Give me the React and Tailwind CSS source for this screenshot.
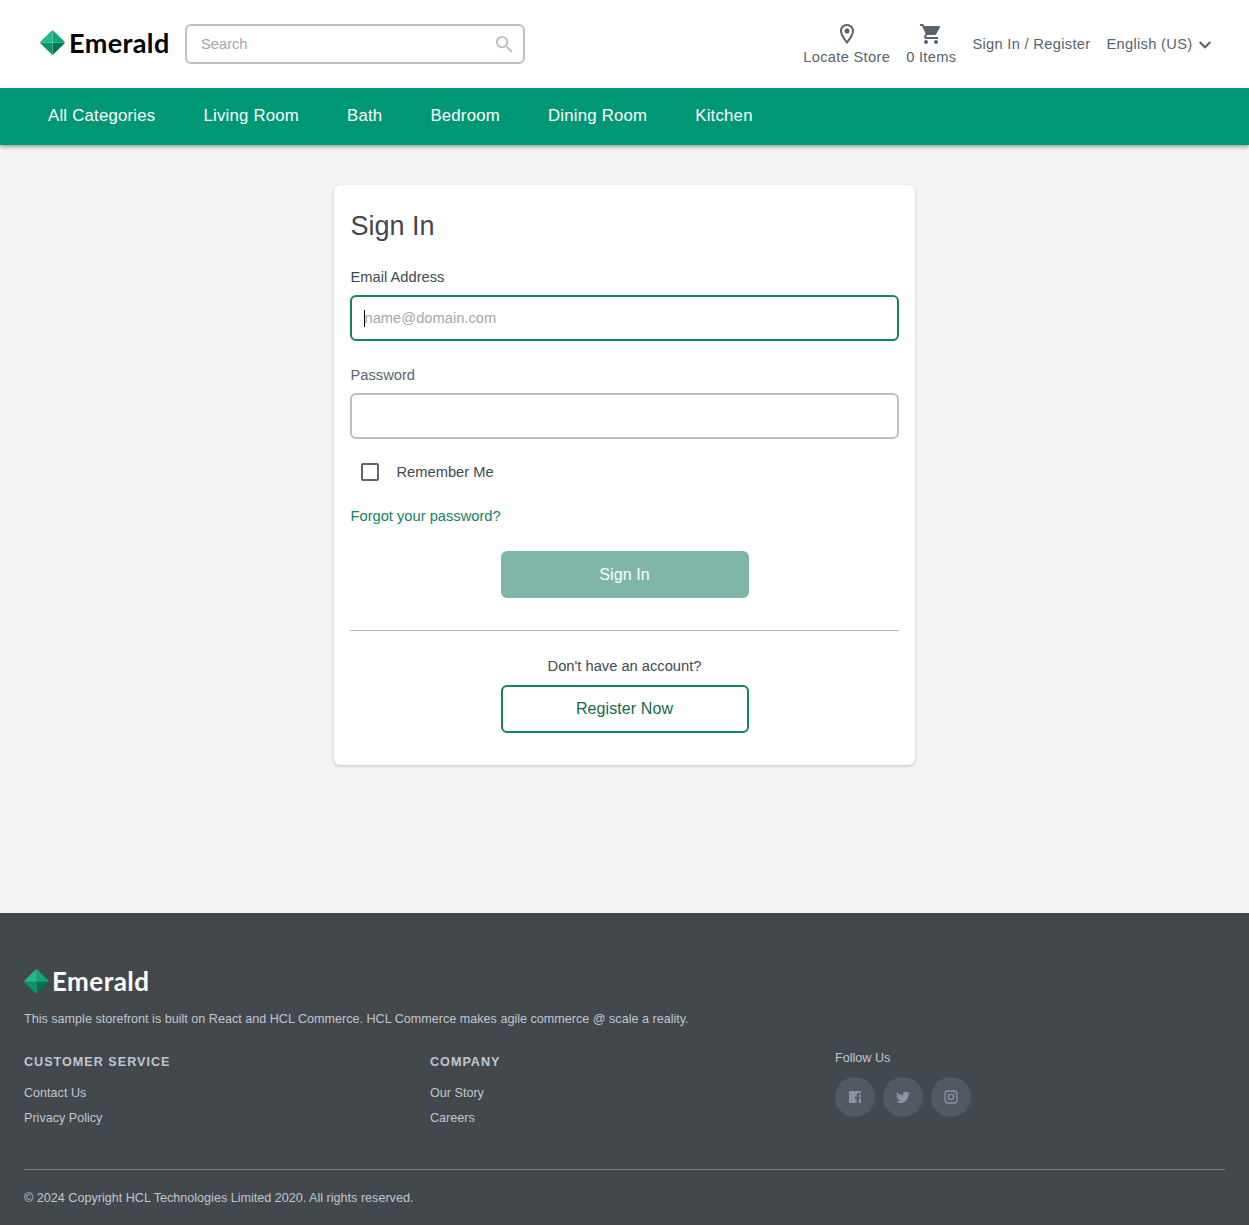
import React from "react";
import {
  MdSearch,
  MdOutlineLocationOn,
  MdShoppingCart,
  MdCheckBoxOutlineBlank,
} from "react-icons/md";

function Gem({ className }) {
  return (
    <svg viewBox="0 0 26 26" className={className} aria-hidden="true">
      <path d="M13 0.3 L13 13 L0.3 13 Q0 12.6 0.6 12 L12 0.8 Q12.5 0.3 13 0.3Z" fill="#23b98e" />
      <path d="M13 0.3 Q13.5 0.3 14 0.8 L25.4 12 Q26 12.6 25.7 13 L13 13Z" fill="#0da77b" />
      <path d="M0.3 13 L13 13 L13 25.7 Q12.5 25.7 12 25.2 L0.6 14 Q0 13.4 0.3 13Z" fill="#079669" />
      <path d="M13 13 L25.7 13 Q26 13.4 25.4 14 L14 25.2 Q13.5 25.7 13 25.7Z" fill="#05734f" />
      <path d="M0.5 13H25.5M13 0.5V25.5" stroke="#5fd0ae" strokeOpacity="0.45" strokeWidth="0.5" />
    </svg>
  );
}

const categories = ["All Categories", "Living Room", "Bath", "Bedroom", "Dining Room", "Kitchen"];

function Header() {
  return (
    <header className="flex h-[88px] items-start bg-white pl-10 pr-[37px] pt-6 text-[14.7px] tracking-[0.3px] text-[#58636f]">
      <a className="mt-1 flex h-7 w-[130px] items-center">
        <Gem className="mt-px size-[25px] shrink-0" />
        <span className="ml-1 mt-px font-['Lato'] text-[27px] font-bold leading-7 tracking-[0.4px] text-black">Emerald</span>
      </a>
      <div className="ml-[15px] flex h-10 w-[340px] items-center justify-between rounded-md border-2 border-[#bfbfbf] pl-3.5 pr-[7px]">
        <span className="tracking-normal text-[#a6a6a6]">Search</span>
        <MdSearch className="size-[23px] text-[#bdbdbd]" />
      </div>
      <nav className="ml-auto flex h-10 items-center gap-4 whitespace-nowrap leading-[22px]">
        <a className="mt-0.5 flex flex-col items-center">
          <MdOutlineLocationOn className="size-6" />
          <span>Locate Store</span>
        </a>
        <a className="mt-0.5 flex flex-col items-center">
          <MdShoppingCart className="size-6" />
          <span>0 Items</span>
        </a>
        <a>Sign In / Register</a>
        <a className="flex items-center">
          English (US)
          <svg viewBox="0 0 14 10" className="ml-[5.5px] mt-0.5 h-2.5 w-3.5" fill="none" stroke="currentColor" strokeWidth="2.1">
            <path d="M1.7 2 L7 7.3 L12.3 2" />
          </svg>
        </a>
      </nav>
    </header>
  );
}

function SignIn() {
  return (
    <section className="mx-auto h-[580px] w-[581px] rounded-md bg-white px-4 pt-[25px] text-[14.7px] leading-[22px] text-[#404b52] shadow-[0_1px_3px_rgba(0,0,0,0.2)]">
      <h1 className="pl-[0.5px] text-[27px] leading-8 text-[#42484d]">Sign In</h1>
      <label className="mt-6 block pl-[0.5px]">Email Address</label>
      <div className="mt-[7px] flex h-[46px] items-center rounded-md border-2 border-[#128463] pl-3 text-[#a6a6a6]">
        <span className="h-[17px] w-px bg-black" />
        <span className="-ml-[0.5px]">name@domain.com</span>
      </div>
      <label className="mt-[23px] block pl-[0.5px] text-[#5b6570]">Password</label>
      <div className="mt-[7px] h-[46px] rounded-md border-2 border-[#bfbfbf]" />
      <div className="mt-[21px] flex h-6 items-center pl-2">
        <MdCheckBoxOutlineBlank className="size-6 text-[#5b6570]" />
        <span className="ml-[14.5px]">Remember Me</span>
      </div>
      <a className="mt-[21px] block pl-[0.5px] text-[#128463]">Forgot your password?</a>
      <button className="mx-auto mt-6 block h-[47px] w-[248px] rounded-md bg-[#80b6a9] text-[16px] tracking-[0.1px] text-white">Sign In</button>
      <hr className="mt-8 border-t border-[#b5b9b8]" />
      <p className="mt-6 text-center">Don&apos;t have an account?</p>
      <button className="mx-auto mt-2 block h-12 w-[248px] rounded-md border-2 border-[#128463] text-[16px] tracking-[0.1px] text-[#15674f]">Register Now</button>
    </section>
  );
}

function FooterColumn({ title, links }) {
  return (
    <div className="pt-1">
      <h2 className="font-bold tracking-[1px]">{title}</h2>
      <ul className="mt-[9px]">
        {links.map((link) => (
          <li key={link} className="h-[25px] leading-[25px]">{link}</li>
        ))}
      </ul>
    </div>
  );
}

const social = [
  { name: "Facebook", d: "M4 3h16a1 1 0 0 1 1 1v16a1 1 0 0 1-1 1h-2.5v-6.2h2.2l.5-3h-2.7V10q0-1.2 1.3-1.2h1.5V6H18q-3.7 0-3.7 3.7v2.1H11.8v3h2.5V21H4a1 1 0 0 1-1-1V4a1 1 0 0 1 1-1z" },
  { name: "Twitter", d: "M22.46 6c-.77.35-1.6.58-2.46.69.88-.53 1.56-1.37 1.88-2.38-.83.5-1.75.85-2.72 1.05C18.37 4.5 17.26 4 16 4c-2.35 0-4.27 1.92-4.27 4.29 0 .34.04.67.11.98C8.28 9.09 5.11 7.38 3 4.79c-.37.63-.58 1.37-.58 2.15 0 1.49.75 2.81 1.91 3.56-.71 0-1.37-.2-1.95-.5v.03c0 2.08 1.48 3.82 3.44 4.21a4.2 4.2 0 0 1-1.93.07 4.28 4.28 0 0 0 4 2.98 8.52 8.52 0 0 1-5.33 1.84q-.51 0-1.02-.06C3.44 20.29 5.7 21 8.12 21 16 21 20.33 14.46 20.33 8.79c0-.19 0-.37-.01-.56.84-.6 1.56-1.36 2.14-2.23z" },
  { name: "Instagram", d: "M7.8 2h8.4A5.8 5.8 0 0 1 22 7.8v8.4a5.8 5.8 0 0 1-5.8 5.8H7.8A5.8 5.8 0 0 1 2 16.2V7.8A5.8 5.8 0 0 1 7.8 2m-.2 2A3.6 3.6 0 0 0 4 7.6v8.8A3.6 3.6 0 0 0 7.6 20h8.8a3.6 3.6 0 0 0 3.6-3.6V7.6A3.6 3.6 0 0 0 16.4 4H7.6m9.65 1.5a1.25 1.25 0 1 1 0 2.5 1.25 1.25 0 0 1 0-2.5M12 7a5 5 0 1 1 0 10 5 5 0 0 1 0-10m0 2a3 3 0 1 0 0 6 3 3 0 0 0 0-6z" },
];

function Footer() {
  return (
    <footer className="h-[312px] bg-[#43484c] px-6 pt-[54px] text-[12.6px] leading-[19px] text-[#bfc6d3]">
      <a className="flex h-7 items-center">
        <Gem className="size-[25px]" />
        <span className="ml-[3px] font-['Lato'] text-[26px] font-bold leading-7 tracking-[0.45px] text-white">Emerald</span>
      </a>
      <p className="mt-[15px]">This sample storefront is built on React and HCL Commerce. HCL Commerce makes agile commerce @ scale a reality.</p>
      <div className="mt-5 grid h-[120px] grid-cols-[406px_405px_1fr]">
        <FooterColumn title="CUSTOMER SERVICE" links={["Contact Us", "Privacy Policy"]} />
        <FooterColumn title="COMPANY" links={["Our Story", "Careers"]} />
        <div>
          <p>Follow Us</p>
          <div className="mt-[9px] flex gap-2">
            {social.map(({ name, d }) => (
              <a key={name} aria-label={name} className="flex size-10 items-center justify-center rounded-full bg-[#515962]">
                <svg viewBox="0 0 24 24" className="size-4 fill-[#8e949e]"><path d={d} /></svg>
              </a>
            ))}
          </div>
        </div>
      </div>
      <p className="border-t border-[#7c8186] pt-[19px]">© 2024 Copyright HCL Technologies Limited 2020. All rights reserved.</p>
    </footer>
  );
}

export default function App() {
  return (
    <div className="flex min-h-[1225px] w-full flex-col bg-[#f3f3f3] font-['Liberation_Sans',Arial,sans-serif]">
      <Header />
      <nav className="flex h-[57px] gap-12 bg-[#009874] px-12 pt-4 text-[16.8px] leading-[23px] tracking-[0.21px] text-white shadow-[0_2px_4px_rgba(0,0,0,0.35)]">
        {categories.map((c) => (
          <a key={c}>{c}</a>
        ))}
      </nav>
      <main className="h-[768px] pt-10">
        <SignIn />
      </main>
      <Footer />
    </div>
  );
}
